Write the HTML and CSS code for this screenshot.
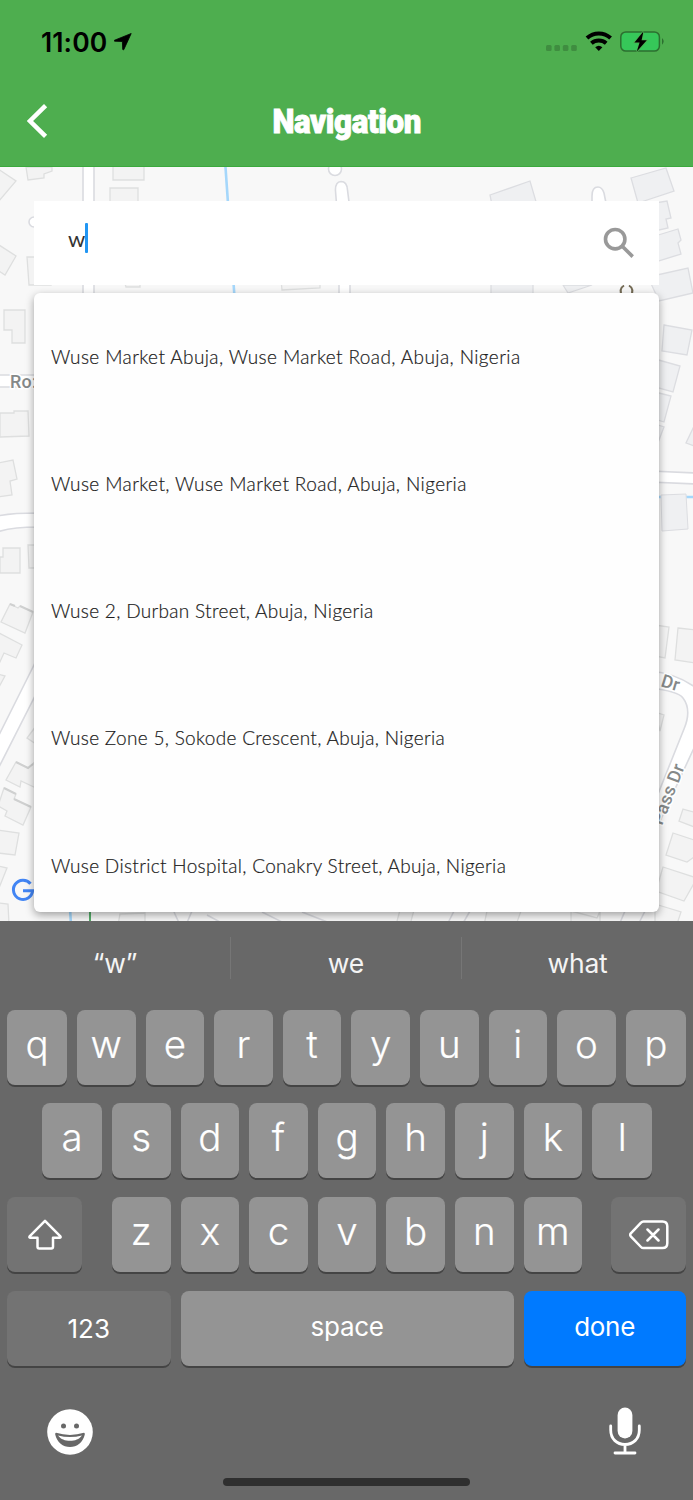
FILE: index.html
```html
<!DOCTYPE html>
<html lang="en">
<head>
<meta charset="utf-8">
<title>Navigation</title>
<link rel="stylesheet" href="styles.css">
</head>
<body>
<div class="phone">
  <header class="header">
    <div class="status">
      <span class="time">11:00</span>
      <svg class="arrow" width="18" height="18" viewBox="0 0 18 18"><path d="M17.2.5.6 7.2c-.6.3-.5 1 .2 1l7.6.3.3 7.7c0 .8.9.9 1.2.2z" stroke="#000" stroke-width=".8"/></svg>
      <svg class="signals" width="120" height="24" viewBox="0 0 120 24">
        <g fill="#3f8d40"><rect x="0" y="15" width="5.6" height="6" rx="1.5"/><rect x="8.400" y="15" width="5.6" height="6" rx="1.5"/><rect x="16.800" y="15" width="5.6" height="6" rx="1.5"/><rect x="25.200" y="15" width="5.6" height="6" rx="1.5"/></g>
        <g fill="none" stroke="#000" stroke-width="4"><path d="M41 8a17.4 17.4 0 0 1 23.600 0"/><path d="M45.400 13.200a11.3 11.3 0 0 1 14.800 0"/></g>
        <path d="M49.200 17.300a5.500 5.500 0 0 1 7.200 0L52.800 21z"/>
        <rect x="74.800" y="1.900" width="38.6" height="19.2" rx="5" fill="#36c759" stroke="#2c6f30" stroke-width="1.5"/>
        <path d="M116 8.100q3.400 3.300 0 6.600z" fill="#2c6f30"/>
        <path d="M97.400 1.500 88.400 12.600h5.200L90.800 21.500l10-11.200h-5.200z" fill="#000" stroke="#4db050" stroke-width="1.5" paint-order="stroke"/>
      </svg>
    </div>
    <div class="titlebar">
      <svg class="back" width="22" height="34" viewBox="0 0 22 34"><path d="M18.600 1.600 3 17l15.600 15.400" fill="none" stroke="#fff" stroke-width="4.500"/></svg>
      <h1 class="title">Navigation</h1>
    </div>
  </header>

  <main class="map">
    <svg class="tiles" width="693" height="754" viewBox="0 167 693 754">
      <g class="building">
        <path d="M26 167H52V171L44 174V178L28 180ZM-2 169 16 181-2 202ZM113 160H144V180H113ZM110 188H138V210H110ZM-1 245 16 256 5 275-1 271ZM27 257H51V285H29ZM4 310H25V343H12V330H4ZM124 280H140V287H126ZM281 280H320V288L282 290Z"/>
        <path d="M0 413H14V411H28L29 436 0 437ZM-2 463 13 460 17 479 10 481 12 495-2 497ZM0 557H3V548H20V573H0ZM28 545H38V568H29ZM10 604 1 622 25 633 33 612 20 606 18 608ZM-1 633 22 645 16 658 4 653-1 664ZM-2 674 5 676-1 687ZM36 726 27 738 36 744Z"/>
        <path d="M16 762 28 768 36 761V788L21 781 20 787 6 780ZM4 788 16 794 14 799 31 807 23 825 5 816 7 811-2 806ZM-2 830 19 833 15 855-2 853ZM-2 866 7 868-1 888ZM-2 903 8 904 9 924H-2Z"/>
      </g>
      <path d="M16 762 28 768 33 764M4 788 16 794M14 799 31 807M10 604 15 606M20 606 33 612" fill="none" stroke="#cfd0d0" stroke-width="2"/>
      <g class="building building-cool">
        <path d="M490 195 530 181 537 205H492ZM631 178 666 168 674 191 638 203ZM655 203 667 201 671 218 666 219 668 228 655 231ZM655 236 678 229 681 240 678 243 681 254 655 262ZM648 277 688 268 693 293 659 301ZM491 280H533V297H491ZM563 285 568 293 592 285Z"/>
        <path d="M664 325 692 330 687 355 662 351ZM655 359 680 366 673 392 655 387ZM655 392 671 396 664 422 655 419ZM655 424 664 427 659 440ZM697 420 686 443 697 447Z"/>
      </g>
      <g class="building">
        <path d="M655 625 669 627 665 658 655 656ZM678 628 696 630V663L675 660ZM655 712 664 715 660 731ZM683 809 697 813V828L679 821ZM673 833 697 841V855L687 862 666 855ZM663 867 697 878 684 901 656 891ZM655 904 681 912 677 924H655Z"/>
        <path d="M120 914 145 913V925H118ZM400 910H414L410 925H396ZM487 911H521L516 925H484ZM571 911 597 918 600 911V925H571Z"/>
      </g>
      <g class="street">
        <path d="M83 160H94V298H83Z"/><path d="M-3 375H40V387H-3Z"/>
        <circle cx="335" cy="169" r="6.500"/><path d="M337 210 335.500 191Q335 182 341 181.500 347 181.500 347.500 190L350 210V297H339V210"/>
        <circle cx="34" cy="222" r="5"/><path d="M592 208V196Q592 187 598 187 602 187 604 193L607 208"/>
        <path d="M-3 516Q12 513 38 513V527Q12 527-3 532Z"/>
        <path d="M38 657-3 739V771L38 690Z"/>
        <path d="M650 471 697 473V484L650 482Z"/>
        <path d="M650 671Q680 674 700 691V735L656 830 650 814 684 729Q692 710 683 698 678 691 650 688Z"/>
        <path d="M174 912 180 925M192 911 186 925M262 912 288 925M302 912 335 925M454 911 447 925M470 911 462 925M625 911 619 925M645 911 638 925M207 915 220 922"/>
      </g>
      <g class="river"><path d="M225 160 234.500 297M650 497H697M70 908 71 925"/></g>
      <path d="M661 495 686 494 688 529 662 531Z" fill="#eff0f2" stroke="#dcdde1"/>
      <path d="M90 908V925" stroke="#55ad69" stroke-width="2"/>
      <path d="M622.500 297Q618 289 624 285.500M630.500 297Q635 289 629 285.500" fill="none" stroke="#746b55" stroke-width="2"/>
      <g class="label"><text x="10" y="387.500">Ro:</text><text transform="translate(660 686) rotate(17)">Dr</text><text transform="translate(662 826) rotate(-69)">Pass Dr</text></g>
      <path d="M30.500 883.800A9.600 9.600 0 1 0 32.600 890.700H23" fill="none" stroke="#4285f4" stroke-width="3"/>
    </svg>
    <div class="overlay">
      <div class="search">
        <span class="query">w</span><span class="caret"></span>
        <svg class="lens" width="32" height="32" viewBox="0 0 32 32"><circle cx="12.200" cy="12.200" r="9.700"/><path d="M19.500 19.500 29.700 29.600"/></svg>
      </div>
      <ul class="results">
        <li class="wide"><span>Wuse Market Abuja, Wuse Market Road, Abuja, Nigeria</span></li>
        <li class="wide"><span>Wuse Market, Wuse Market Road, Abuja, Nigeria</span></li>
        <li><span>Wuse 2, Durban Street, Abuja, Nigeria</span></li>
        <li><span>Wuse Zone 5, Sokode Crescent, Abuja, Nigeria</span></li>
        <li><span>Wuse District Hospital, Conakry Street, Abuja, Nigeria</span></li>
      </ul>
    </div>
  </main>

  <section class="keyboard">
    <div class="suggestions"><span>“w”</span><span>we</span><span>what</span></div>
    <div class="keys">
      <div class="row"><b class="key first">q</b><b class="key">w</b><b class="key">e</b><b class="key">r</b><b class="key">t</b><b class="key">y</b><b class="key">u</b><b class="key">i</b><b class="key">o</b><b class="key last">p</b></div>
      <div class="row row-home"><b class="key first">a</b><b class="key">s</b><b class="key">d</b><b class="key">f</b><b class="key">g</b><b class="key">h</b><b class="key">j</b><b class="key">k</b><b class="key last">l</b></div>
      <div class="row">
        <b class="key fn shift"><svg width="36" height="32" viewBox="0 0 36 32"><path d="M18 1.800 2.600 17.300Q1.800 18.800 3.500 18.800H10.500V27.800Q10.500 29.500 12.200 29.500H24.300Q26 29.500 26 27.800V18.800H32.500Q34.200 18.800 33.400 17.300Z"/></svg></b>
        <b class="key">z</b><b class="key">x</b><b class="key">c</b><b class="key">v</b><b class="key">b</b><b class="key">n</b><b class="key">m</b>
        <b class="key fn delete"><svg width="40" height="30" viewBox="0 0 40 30"><path d="M14.500 1.500H33.500Q38.300 1.500 38.300 6.300V23.300Q38.300 28.100 33.500 28.100H14.500Q13 28.100 12 27L1.800 16.300Q.6 14.800 1.800 13.300L12 2.600Q13 1.500 14.500 1.500ZM18.500 9.500 29.500 20.500M29.500 9.500 18.500 20.500"/></svg></b>
      </div>
      <div class="row"><b class="key fn word numbers">123</b><b class="key word space">space</b><b class="key word done">done</b></div>
    </div>
    <div class="dock">
      <svg class="emoji" width="46" height="46" viewBox="0 0 46 46"><circle cx="23" cy="23" r="22.800" fill="#fff"/><g fill="#686868"><circle cx="16.500" cy="17" r="2.500"/><circle cx="29.500" cy="17" r="2.500"/><path d="M9 23.800Q23 28 37 23.800 38 23.800 37.800 25.500C36 33.500 30 38 23 38S10 33.500 8.200 25.500Q8 23.800 9 23.800Z"/></g><path d="M11 26.500Q23 29.500 35 26.500C32 30.400 28 31.800 23 31.800S14 30.400 11 26.500Z" fill="#fff"/></svg>
      <svg width="32" height="48" viewBox="0 0 32 48"><rect x="8.600" y=".5" width="14.800" height="31" rx="7.400" fill="#fff"/><path d="M1.700 19V23C1.700 32 8 37.500 16 37.500S30.300 32 30.300 23V19M16 37.500V46M6 46H26" fill="none" stroke="#fff" stroke-width="2.800" stroke-linecap="round"/></svg>
    </div>
    <div class="home"></div>
  </section>
</div>
</body>
</html>
```
FILE: styles.css
```css
* { box-sizing: border-box; }
body { margin: 0; background: #686868; }
.phone { width: 693px; height: 1500px; overflow: hidden; display: flex; flex-direction: column; }

.header { height: 167px; flex: none; background: #4eae4f; border-bottom: 1px solid #3ba93d; }
.status { height: 84px; display: flex; align-items: center; padding: 0 27px 0 41px; font-family: Inter, sans-serif; }
.time { width: 67px; font-size: 26.5px; font-weight: 600; letter-spacing: 0.1px; white-space: nowrap; }
.arrow { margin-left: 6px; }
.signals { margin-left: auto; }
.titlebar { height: 74px; display: grid; grid-template-columns: 80px 1fr 80px; align-items: center; }
.back { margin-left: 26.5px; }
.title { margin: 0; justify-self: center; font: 900 34px/40px Roboto, sans-serif; color: #fff; white-space: nowrap; transform: scaleX(0.92); letter-spacing: -0.4px; -webkit-text-stroke: 0.9px #fff; }

.map { position: relative; height: 754px; flex: none; overflow: hidden; background: #f8f8f8; }
.tiles { position: absolute; left: 0; top: 0; }
.building { fill: #f3f3f3; stroke: #dedfdf; stroke-width: 1.3; }
.building-cool { fill: #eff0f2; stroke: #dcdde1; }
.street { fill: #fff; stroke: #dadbe0; stroke-width: 1.6; }
.river { fill: none; stroke: #a5d7fb; stroke-width: 2.6; }
.label { fill: #858989; font: 500 18px Roboto, sans-serif; letter-spacing: 0.2px; stroke: #fff; stroke-width: 3px; paint-order: stroke; }
.overlay { position: relative; padding: 34px 34px 0 34px; display: flex; flex-direction: column; gap: 8px; }
.search { height: 84px; background: #fff; display: flex; align-items: center; padding: 0 24px 0 34px; }
.query { width: 17px; font: 400 22px/30px Lato, sans-serif; color: #333; margin-top: -8px; }
.caret { width: 3px; height: 30px; background: #2196f3; border-radius: 1px; margin-top: -10px; }
.lens { margin-left: auto; margin-top: -1px; fill: none; stroke: #999; stroke-width: 3.6; }
.results { height: 619px; margin: 0; padding: 0; list-style: none; overflow: hidden; background: #fefefe; border-radius: 6px; box-shadow: 0 3px 9px rgba(0, 0, 0, 0.36); }
.results li { height: 127.25px; display: flex; align-items: center; padding-left: 17px; font: 300 19px/24px Lato, sans-serif; letter-spacing: 0.32px; color: #1c1c1c; -webkit-text-stroke: 0.2px #1c1c1c; white-space: nowrap; }
.results .wide { letter-spacing: 0.4px; }

.keyboard { height: 579px; background: #686868; color: #fff; font-family: Inter, sans-serif; }
.suggestions { height: 88.5px; display: grid; grid-template-columns: 230px 231px 1fr; padding-top: 16px; }
.suggestions span { height: 42px; line-height: 53px; text-align: center; font-size: 26.5px; letter-spacing: -0.2px; color: #f4f4f4; }
.suggestions span + span { border-left: 1.5px solid #767676; }
.keys { display: flex; flex-direction: column; gap: 18.7px; padding: 0 7px; }
.row { display: flex; gap: 10px; height: 75px; }
.row-home { padding-left: 35px; }
.key { width: 58.6px; flex: none; height: 75px; border-radius: 8px; background: #949494; box-shadow: 0 2px 0 #444; text-align: center; font-size: 38.5px; font-weight: 300; line-height: 69px; -webkit-text-stroke: 0.2px #fff; }
.first { width: 60px; }
.last { width: 60px; }
.fn { background: #737373; }
.shift { width: 75px; margin-right: 20px; }
.delete { width: 75px; margin-left: 18.6px; }
.shift, .delete { display: flex; align-items: center; justify-content: center; padding: 2px 0 0 1px; }
.key svg { fill: none; stroke: #fff; stroke-width: 2.5; stroke-linejoin: round; stroke-linecap: round; }
.word { font-size: 26px; font-weight: 400; line-height: 71px; letter-spacing: -0.3px; -webkit-text-stroke: 0; }
.numbers { width: 163.6px; line-height: 75px; letter-spacing: 0; }
.space { width: 333px; }
.done { width: 162px; background: #007aff; }
.dock { display: flex; justify-content: space-between; padding: 41px 52.5px 0 46.5px; height: 112px; }
.emoji { margin-top: 2px; }
.home { width: 247px; height: 8px; margin: 0 auto; border-radius: 4px; background: #2f2f2f; }
```
